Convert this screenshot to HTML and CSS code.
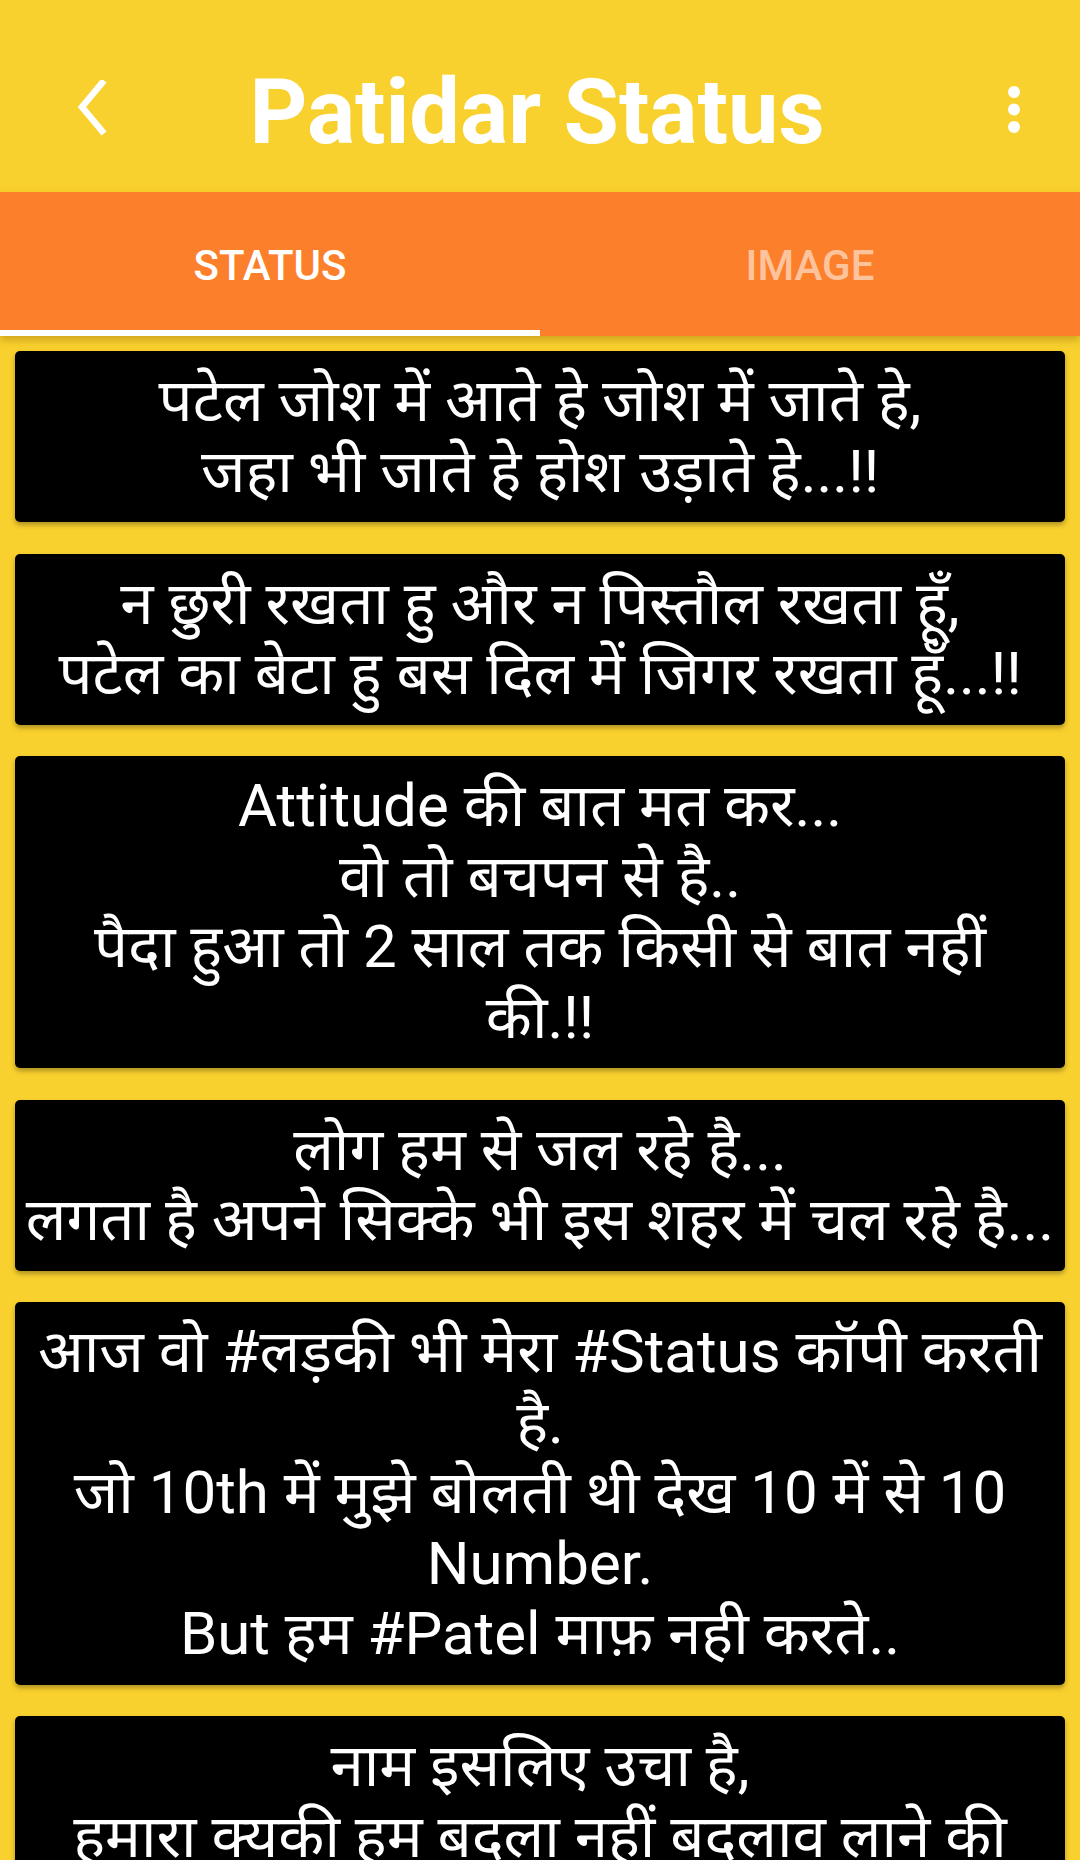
FILE: index.html
```html
<!DOCTYPE html>
<html lang="hi">
<head>
<meta charset="utf-8">
<title>Patidar Status</title>
<link rel="stylesheet" href="styles.css">
</head>
<body>
<header class="appbar">
  <div class="appbar-left">
    <svg class="icon-back" viewBox="0 0 40 60" width="40" height="60" aria-hidden="true">
      <polyline points="26,3 6,27 26,51" fill="none" stroke="#fff" stroke-width="6.5" stroke-linecap="square" stroke-linejoin="miter"/>
    </svg>
  </div>
  <h1 class="title">Patidar Status</h1>
  <div class="appbar-right">
    <svg class="icon-more" viewBox="0 0 14 50" width="14" height="50" aria-hidden="true">
      <circle cx="7" cy="7" r="6" fill="#fff"/>
      <circle cx="7" cy="24.5" r="6" fill="#fff"/>
      <circle cx="7" cy="42" r="6" fill="#fff"/>
    </svg>
  </div>
</header>
<nav class="tabs">
  <div class="tab tab-active">STATUS</div>
  <div class="tab">IMAGE</div>
</nav>
<main class="list">
  <div class="card">पटेल जोश में आते हे जोश में जाते हे,<br>जहा भी जाते हे होश उड़ाते हे...!!</div>
  <div class="card">न छुरी रखता हु और न पिस्तौल रखता हूँ,<br>पटेल का बेटा हु बस दिल में जिगर रखता हूँ...!!</div>
  <div class="card">Attitude की बात मत कर...<br>वो तो बचपन से है..<br>पैदा हुआ तो 2 साल तक किसी से बात नहीं<br>की.!!</div>
  <div class="card">लोग हम से जल रहे है...<br>लगता है अपने सिक्के भी इस शहर में चल रहे है...</div>
  <div class="card">आज वो #लड़की भी मेरा #Status कॉपी करती<br>है.<br>जो 10th में मुझे बोलती थी देख 10 में से 10<br>Number.<br>But हम #Patel माफ़ नही करते..</div>
  <div class="card">नाम इसलिए उचा है,<br>हमारा क्यकी हम बदला नहीं बदलाव लाने की<br>सोचते है..!!</div>
</main>
</body>
</html>
```
FILE: styles.css
```css
html, body {
  margin: 0;
  padding: 0;
}
body {
  background: #f9d12e;
  font-family: Roboto, "Noto Sans Devanagari", "Noto Sans", sans-serif;
  width: 1080px;
  height: 1860px;
  overflow: hidden;
}
.appbar {
  height: 192px;
  background: #f9d12e;
  display: grid;
  grid-template-columns: 1fr auto 1fr;
  align-items: center;
}
.appbar-left {
  padding-left: 76px;
  padding-top: 28px;
  display: flex;
}
.appbar-right {
  display: flex;
  justify-content: flex-end;
  padding-right: 59px;
  padding-top: 28px;
}
.title {
  margin: 0;
  padding-top: 32px;
  font-family: Roboto, sans-serif;
  font-weight: 700;
  font-size: 90px;
  color: #fff;
  letter-spacing: 0;
  transform: translateX(-3px);
}
.tabs {
  height: 144px;
  background: #fc802c;
  display: flex;
  position: relative;
  box-shadow: 0 4px 8px rgba(120, 80, 0, 0.35);
  z-index: 1;
}
.tab {
  flex: 1;
  display: flex;
  align-items: center;
  justify-content: center;
  padding-top: 8px;
  border-bottom: 6px solid transparent;
  font-family: Roboto, sans-serif;
  font-weight: 500;
  font-size: 42px;
  color: rgba(255, 255, 255, 0.55);
  box-sizing: border-box;
}
.tab-active {
  color: #fff;
  border-bottom-color: #fff;
}
.list {
  display: flex;
  flex-direction: column;
  gap: 31.5px;
  padding: 15px 15px;
}
.card {
  background: #000;
  color: #fff;
  border-radius: 5px;
  box-shadow: 0 3px 5px rgba(0, 0, 0, 0.3);
  padding: 15px 6px;
  text-align: center;
  font-size: 60px;
  line-height: 70.5px;
}
```
